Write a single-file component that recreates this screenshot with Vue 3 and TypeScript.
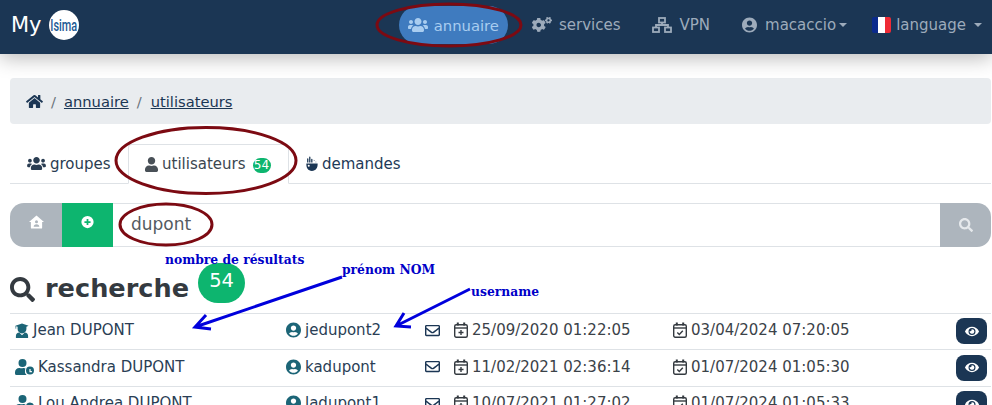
<script setup lang="ts">
const P = {
  users: 'M96 224c35.3 0 64-28.7 64-64s-28.7-64-64-64-64 28.7-64 64 28.7 64 64 64zm448 0c35.3 0 64-28.7 64-64s-28.7-64-64-64-64 28.7-64 64 28.7 64 64 64zm32 32h-64c-17.6 0-33.5 7.1-45.1 18.6 40.3 22.1 68.9 62 75.1 109.4h66c17.7 0 32-14.3 32-32v-32c0-35.3-28.7-64-64-64zm-256 0c61.9 0 112-50.1 112-112S381.9 32 320 32 208 82.1 208 144s50.1 112 112 112zm76.8 32h-8.3c-20.8 10-43.9 16-68.5 16s-47.6-6-68.5-16h-8.3C179.6 288 128 339.6 128 403.2V432c0 26.5 21.5 48 48 48h288c26.5 0 48-21.5 48-48v-28.8c0-63.6-51.6-115.2-115.2-115.2zm-223.7-13.4C161.5 263.1 145.6 256 128 256H64c-35.3 0-64 28.7-64 64v32c0 17.7 14.3 32 32 32h65.9c6.3-47.4 34.9-87.3 75.2-109.4z',
  home: 'M280.37 148.26L96 300.11V464a16 16 0 0 0 16 16l112.06-.29a16 16 0 0 0 15.92-16V368a16 16 0 0 1 16-16h64a16 16 0 0 1 16 16v95.64a16 16 0 0 0 16 16.05L464 480a16 16 0 0 0 16-16V300L295.67 148.26a12.19 12.19 0 0 0-15.3 0zM571.6 251.47L488 182.56V44.05a12 12 0 0 0-12-12h-56a12 12 0 0 0-12 12v72.61L318.47 43a48 48 0 0 0-61 0L4.34 251.47a12 12 0 0 0-1.6 16.9l25.5 31A12 12 0 0 0 45.15 301l235.22-193.74a12.19 12.19 0 0 1 15.3 0L530.9 301a12 12 0 0 0 16.9-1.6l25.5-31a12 12 0 0 0-1.7-16.93z',
  user: 'M224 256c70.7 0 128-57.3 128-128S294.7 0 224 0 96 57.3 96 128s57.3 128 128 128zm89.6 32h-16.7c-22.2 10.2-46.9 16-72.9 16s-50.6-5.8-72.9-16h-16.7C60.2 288 0 348.2 0 422.4V464c0 26.5 21.5 48 48 48h352c26.5 0 48-21.5 48-48v-41.6c0-74.2-60.2-134.4-134.4-134.4z',
  search: 'M505 442.7L405.3 343c-4.5-4.5-10.6-7-17-7H372c27.6-35.3 44-79.7 44-128C416 93.1 322.9 0 208 0S0 93.1 0 208s93.1 208 208 208c48.3 0 92.7-16.4 128-44v16.3c0 6.4 2.5 12.5 7 17l99.7 99.7c9.4 9.4 24.6 9.4 33.9 0l28.3-28.3c9.4-9.4 9.4-24.6.1-34zM208 336c-70.7 0-128-57.2-128-128 0-70.7 57.2-128 128-128 70.7 0 128 57.2 128 128 0 70.7-57.2 128-128 128z',
  userCircle: 'M248 8C111 8 0 119 0 256s111 248 248 248 248-111 248-248S385 8 248 8zm0 96c48.6 0 88 39.4 88 88s-39.4 88-88 88-88-39.4-88-88 39.4-88 88-88zm0 344c-58.7 0-111.3-26.6-146.5-68.2 18.8-35.4 55.6-59.8 98.5-59.8 2.4 0 4.8.4 7.1 1.1 13 4.2 26.6 6.9 40.9 6.9 14.3 0 28-2.7 40.9-6.9 2.3-.7 4.7-1.1 7.1-1.1 42.9 0 79.7 24.4 98.5 59.8C359.3 421.4 306.7 448 248 448z',
  eye: 'M572.52 241.4C518.29 135.59 410.93 64 288 64S57.68 135.64 3.48 241.41a32.35 32.35 0 0 0 0 29.19C57.71 376.41 165.07 448 288 448s230.32-71.64 284.52-177.41a32.35 32.35 0 0 0 0-29.19zM288 400a144 144 0 1 1 144-144 143.93 143.93 0 0 1-144 144zm0-240a95.31 95.31 0 0 0-25.31 3.79 47.85 47.85 0 0 1-66.9 66.9A95.78 95.78 0 1 0 288 160z',
  envelope: 'M464 64H48C21.49 64 0 85.49 0 112v288c0 26.51 21.49 48 48 48h416c26.51 0 48-21.49 48-48V112c0-26.51-21.49-48-48-48zm0 48v40.805c-22.422 18.259-58.168 46.651-134.587 106.49-16.841 13.247-50.201 45.072-73.413 44.701-23.208.375-56.579-31.459-73.413-44.701C106.18 199.465 70.425 171.067 48 152.805V112h416zM48 400V214.398c22.914 18.251 55.409 43.862 104.938 82.646 21.857 17.205 60.134 55.186 103.062 54.955 42.717.231 80.509-37.199 103.053-54.947 49.528-38.783 82.032-64.401 104.947-82.653V400H48z',
  cogs: 'M512.1 191l-8.2 14.3c-3 5.3-9.4 7.5-15.1 5.4-11.8-4.4-22.6-10.7-32.1-18.6-4.6-3.8-5.8-10.5-2.8-15.7l8.2-14.3c-6.9-8-12.3-17.3-15.9-27.4h-16.5c-6 0-11.2-4.3-12.2-10.3-2-12-2.1-24.6 0-37.1 1-6 6.2-10.4 12.2-10.4h16.5c3.6-10.1 9-19.4 15.9-27.4l-8.2-14.3c-3-5.2-1.9-11.9 2.8-15.7 9.5-7.9 20.4-14.2 32.1-18.6 5.7-2.1 12.1.1 15.1 5.4l8.2 14.3c10.5-1.9 21.2-1.9 31.7 0L552 6.3c3-5.3 9.4-7.5 15.1-5.4 11.8 4.4 22.6 10.7 32.1 18.6 4.6 3.8 5.8 10.5 2.8 15.7l-8.2 14.3c6.9 8 12.3 17.3 15.9 27.4h16.5c6 0 11.2 4.3 12.2 10.3 2 12 2.1 24.6 0 37.1-1 6-6.2 10.4-12.2 10.4h-16.5c-3.6 10.1-9 19.4-15.9 27.4l8.2 14.3c3 5.2 1.9 11.9-2.8 15.7-9.5 7.9-20.4 14.2-32.1 18.6-5.7 2.1-12.1-.1-15.1-5.4l-8.2-14.3c-10.4 1.9-21.2 1.9-31.7 0zm-10.5-58.8c38.5 29.6 82.4-14.3 52.8-52.8-38.5-29.7-82.4 14.3-52.8 52.8zM386.3 286.1l33.7 16.8c10.1 5.8 14.5 18.1 10.5 29.1-8.9 24.2-26.4 46.4-42.6 65.8-7.4 8.9-20.2 11.1-30.3 5.3l-29.1-16.8c-16 13.7-34.6 24.6-54.9 31.7v33.6c0 11.6-8.3 21.6-19.7 23.6-24.6 4.2-50.4 4.4-75.9 0-11.5-2-20-11.9-20-23.6V418c-20.3-7.2-38.9-18-54.9-31.7L74 403c-10 5.8-22.9 3.6-30.3-5.3-16.2-19.4-33.3-41.6-42.2-65.7-4-10.9.4-23.2 10.5-29.1l33.3-16.8c-3.9-20.9-3.9-42.4 0-63.4L12 205.8c-10.1-5.8-14.6-18.1-10.5-29 8.9-24.2 26-46.4 42.2-65.8 7.4-8.9 20.2-11.1 30.3-5.3l29.1 16.8c16-13.7 34.6-24.6 54.9-31.7V57.1c0-11.5 8.2-21.5 19.6-23.5 24.6-4.2 50.5-4.4 76-.1 11.5 2 20 11.9 20 23.6v33.6c20.3 7.2 38.9 18 54.9 31.7l29.1-16.8c10-5.8 22.9-3.6 30.3 5.3 16.2 19.4 33.2 41.6 42.1 65.8 4 10.9.1 23.2-10 29.1l-33.7 16.8c3.9 21 3.9 42.5 0 63.5zm-117.6 21.1c59.2-77-28.7-164.9-105.7-105.7-59.2 77 28.7 164.9 105.7 105.7z',
  graduate: 'M1 3 8 .4 15 3l-2.300 .9v2.500a4.700 4.700 0 0 1-9.400 0V3.900L1.800 3.400v2.800H1.200zM1.500 16v-2.200C1.500 11.600 3 10.400 5 10.200L8 13l3-2.800c2 .2 3.500 1.400 3.500 3.600V16z',
  userClock: 'M7.500 8a4 4 0 1 0 0-8 4 4 0 0 0 0 8zM10 11.500c0-.7.2-1.400.5-2-.5-.3-1.100-.5-1.700-.5h-.5a5.500 5.500 0 0 1-3.600 0h-.5A4.200 4.200 0 0 0 0 13.200V14.500A1.500 1.500 0 0 0 1.500 16h10A4.500 4.500 0 0 1 10 11.500zM15 7.500a4 4 0 1 0 0 8 4 4 0 0 0 0-8zm1.900 5.800h-2.500v-3.400h1.200v2.200h1.300z',
}

interface Person {
  name: string
  kind: 'graduate' | 'clock'
  login: string
  created: string
  seen: string
}

const people: Person[] = [
  { name: 'Jean DUPONT', kind: 'graduate', login: 'jedupont2', created: '25/09/2020 01:22:05', seen: '03/04/2024 07:20:05' },
  { name: 'Kassandra DUPONT', kind: 'clock', login: 'kadupont', created: '11/02/2021 02:36:14', seen: '01/07/2024 01:05:30' },
  { name: 'Lou Andrea DUPONT', kind: 'clock', login: 'ladupont1', created: '10/07/2021 01:27:02', seen: '01/07/2024 01:05:33' },
]
</script>

<template>
  <div class="page">
    <header class="navbar">
      <div class="brand">
        <span class="brand-my">My</span>
        <span class="brand-logo"><span class="brand-isima">Isima</span></span>
      </div>
      <nav class="menu">
        <a class="item active">
          <svg class="i-users" viewBox="0 0 640 512"><path :d="P.users" /></svg><span class="t-annuaire">annuaire</span>
        </a>
        <a class="item item-services">
          <svg class="i-users" viewBox="0 0 640 512"><path :d="P.cogs" /></svg>services
        </a>
        <a class="item item-vpn">
          <svg class="i-net stroked" viewBox="0 0 20 16" stroke="currentColor" stroke-width="1.800">
            <rect x="7" y="1" width="6" height="4.500" />
            <rect x="1" y="10.500" width="6" height="4.500" />
            <rect x="13" y="10.500" width="6" height="4.500" />
            <path d="M10 5.500V8M4 10.500V8h12v2.500" />
          </svg>VPN
        </a>
        <a class="item item-user">
          <svg class="i-circle" viewBox="0 0 496 512"><path :d="P.userCircle" /></svg>macaccio<span class="caret"></span>
        </a>
        <a class="item item-lang">
          <span class="flag"><i class="f-b"></i><i class="f-w"></i><i class="f-r"></i></span>language<span class="caret caret-far"></span>
        </a>
      </nav>
    </header>

    <main class="content">
      <div class="crumbs">
        <svg class="i-home" viewBox="0 0 576 512"><path :d="P.home" /></svg>
        <span class="sep">/</span>
        <a class="crumb">annuaire</a>
        <span class="sep sep-last">/</span>
        <a class="crumb">utilisateurs</a>
      </div>

      <div class="tabs">
        <a class="tab tab-groups">
          <svg class="i-users" viewBox="0 0 640 512"><path :d="P.users" /></svg>groupes
        </a>
        <a class="tab tab-active">
          <svg class="i-user" viewBox="0 0 448 512"><path :d="P.user" /></svg>utilisateurs
          <span class="tab-badge">54</span>
        </a>
        <a class="tab tab-req">
          <svg class="i-hand" viewBox="0 0 13 16">
            <path d="M1.200 2.500a.7.7 0 0 1 1.400 0v4h-1.400zM3.400 .7a.7.7 0 0 1 1.400 0v5.800H3.400zM5.600 3a.7.7 0 0 1 1.400 0v3.500H5.600z" />
            <path d="M.4 7.500h12.200c.3 4.500-2 8-6.200 8S.1 12 .4 7.500zM8.500 3.500l1 .6-1 .6zM10.500 5.300l.9.5-.9.500z" />
            <circle cx="3" cy="10" r="1.100" fill="#fff" />
          </svg>demandes
        </a>
      </div>

      <div class="searchbar">
        <button class="sb-btn sb-home">
          <svg viewBox="0 0 16 14" class="i-sb"><path fill-rule="evenodd" d="M8 0 0 7h2v6a1 1 0 0 0 1 1h10a1 1 0 0 0 1-1V7h2zM8 5a1.600 1.600 0 1 1 0 3.200A1.600 1.600 0 0 1 8 5zM5 12c0-1.600 1-2.600 3-2.600s3 1 3 2.600z" /></svg>
        </button>
        <button class="sb-btn sb-add">
          <svg viewBox="0 0 16 16" class="i-sb"><path fill-rule="evenodd" d="M8 1a7 7 0 1 0 0 14A7 7 0 0 0 8 1zM7 4.500h2V7h2.500v2H9v2.500H7V9H4.500V7H7z" /></svg>
        </button>
        <div class="sb-input">dupont</div>
        <button class="sb-btn sb-go">
          <svg viewBox="0 0 512 512" class="i-go"><path :d="P.search" /></svg>
        </button>
      </div>

      <div class="heading">
        <svg class="i-h" viewBox="0 0 512 512"><path :d="P.search" /></svg>
        <h1 class="title">recherche</h1>
        <span class="count">54</span>
      </div>

      <div v-for="p in people" :key="p.login" class="row">
        <div class="cell name">
          <svg v-if="p.kind === 'graduate'" class="i-grad" viewBox="1 0 14 16"><path :d="P.graduate" /></svg>
          <svg v-else class="i-clock" viewBox="0 0 19 16"><path :d="P.userClock" /></svg>
          <span>{{ p.name }}</span>
        </div>
        <div class="cell login">
          <svg class="i-login" viewBox="0 0 496 512"><path :d="P.userCircle" /></svg>
          <span>{{ p.login }}</span>
        </div>
        <div class="cell">
          <svg class="i-mail" viewBox="0 0 512 512"><path :d="P.envelope" /></svg>
        </div>
        <div class="cell date">
          <svg class="i-cal stroked" viewBox="0 0 14 16" stroke="currentColor" stroke-width="1.400">
            <rect x=".7" y="2.700" width="12.600" height="12.600" rx="1.500" />
            <path d="M.7 6h12.600" />
            <path d="M3.800 .5v3M10.200 .5v3" stroke-width="2" />
            <path d="M7 8v5M4.500 10.500h5" />
          </svg>
          <span>{{ p.created }}</span>
        </div>
        <div class="cell date">
          <svg class="i-cal stroked" viewBox="0 0 14 16" stroke="currentColor" stroke-width="1.400">
            <rect x=".7" y="2.700" width="12.600" height="12.600" rx="1.500" />
            <path d="M.7 6h12.600" />
            <path d="M3.800 .5v3M10.200 .5v3" stroke-width="2" />
            <path d="M4.300 10.500l2 2 3.500-3.800" />
          </svg>
          <span>{{ p.seen }}</span>
        </div>
        <div class="cell cell-btn">
          <button class="view">
            <svg class="i-eye" viewBox="0 0 576 512"><path :d="P.eye" /></svg>
          </button>
        </div>
      </div>
    </main>

    <svg class="overlay stroked" viewBox="0 0 992 405" width="992" height="405">
      <g class="ellipses">
        <ellipse cx="449" cy="25" rx="72" ry="21" />
        <ellipse cx="206" cy="160.500" rx="90" ry="33" />
        <ellipse cx="166" cy="224.500" rx="46" ry="20.500" />
      </g>
      <g class="arrows">
        <path d="M342 277 195 327M206 315 195 327 211 329" />
        <path d="M470 289 396 326M404 313 396 326 411 327" />
      </g>
      <g class="note">
        <text x="165" y="264">nombre de résultats</text>
        <text x="342" y="274">prénom NOM</text>
        <text x="471" y="296">username</text>
      </g>
    </svg>
  </div>
</template>

<style>
html, body { margin: 0; height: 405px; overflow: hidden; background: #fff; }
</style>

<style scoped>
.page {
  position: relative;
  width: 992px;
  height: 405px;
  overflow: hidden;
  font-family: "DejaVu Sans", sans-serif;
  font-size: 15px;
  color: #343a40;
}
svg { fill: currentColor; display: block; flex: none; }
svg.stroked { fill: none; }

.navbar {
  height: 54px;
  display: flex;
  align-items: center;
  box-sizing: border-box;
  padding-bottom: 4px;
  background: #1b3654;
  box-shadow: 0 4px 20px rgba(0, 0, 0, .28);
  position: relative;
}
.brand { display: flex; align-items: center; margin-left: 11px; }
.brand-my { color: #fff; font-size: 21px; margin-right: 7px; }
.brand-logo {
  width: 30px; height: 30px; border-radius: 50%; background: #fff;
  display: flex; align-items: center; justify-content: center;
}
.brand-isima {
  font-family: Roboto, sans-serif; font-size: 16px; color: #1c5a94;
  transform: scaleX(.68); display: block; font-weight: 500;
}
.menu { display: flex; align-items: center; margin-left: auto; margin-right: 1px; }
.item { display: flex; align-items: center; height: 38px; padding: 0 9px; color: #9dabbb; }
.item.active { background: #3f7bbf; color: #a9cdf0; border-radius: 19px; }
.t-annuaire { font-size: 14.8px; }
.item-services { margin-left: 15px; }
.item-vpn { margin-left: 13px; }
.item-user { margin-left: 14px; }
.item-lang { margin-left: 7px; }
.i-users { width: 20px; height: 16px; margin-right: 6px; }
.item-services .i-users { margin-right: 7px; }
.i-net { width: 20px; height: 16px; margin-right: 8px; }
.i-circle { width: 15px; height: 16px; margin-right: 8px; }
.caret {
  width: 0; height: 0; margin-left: 3px; margin-top: -1px;
  border-left: 4px solid transparent; border-right: 4px solid transparent; border-top: 4px solid currentColor;
}
.caret-far { margin-left: 8px; }
.flag { display: flex; width: 19px; height: 16px; margin-right: 5px; border-radius: 2px; overflow: hidden; }
.flag i { flex: 1; display: block; }
.f-b { background: #0a2a8c; }
.f-w { background: #fff; }
.f-r { background: #ee2a35; }

.content { padding: 24px 1px 0 10px; }
.crumbs {
  height: 46px; display: flex; align-items: center; padding-left: 16px;
  background: #e9ecef; border-radius: 4px; color: #1b3654; font-size: 14.7px;
}
.i-home { width: 17px; height: 15px; }
.sep { color: #6c757d; margin: 0 8px; }
.sep-last { margin-right: 9px; }
.crumb { text-decoration: underline; }

.tabs { display: flex; height: 40px; margin-top: 20px; border-bottom: 1px solid #dee2e6; box-sizing: border-box; }
.tab { display: flex; align-items: center; color: #2a3d52; box-sizing: border-box; }
.tab-groups { margin-left: 17px; width: 101px; }
.tab-groups .i-users { width: 19px; height: 15px; margin-right: 4px; }
.tab-active {
  width: 161px; height: 40px; padding-left: 16px; color: #3b4650; background: #fff;
  border: 1px solid #dee2e6; border-bottom-color: #fff; border-radius: 4px 4px 0 0;
}
.i-user { width: 13px; height: 15px; margin-right: 4px; color: #495057; }
.tab-badge {
  width: 18px; height: 15px; margin-left: 7px; margin-top: 3px; border-radius: 8px;
  background: #0db56f; color: #fff; font-size: 12px; line-height: 15px; text-align: center;
}
.tab-req { margin-left: 17px; color: #1e3a58; }
.i-hand { width: 12px; height: 16px; margin-right: 4px; color: #1b3654; }

.searchbar { display: flex; height: 44px; margin-top: 19px; }
.sb-btn { border: 0; padding: 0; display: flex; align-items: center; justify-content: center; color: #fff; }
.sb-home { width: 52px; background: #adb5bd; border-radius: 14px 0 0 14px; padding-bottom: 6px; }
.sb-add { width: 51px; background: #0db56f; padding-bottom: 6px; }
.i-sb { width: 15px; height: 14px; }
.sb-input {
  flex: 1; display: flex; align-items: center; padding: 0 0 3px 18px; box-sizing: border-box;
  border-top: 1px solid #dee2e6; border-bottom: 1px solid #dee2e6;
  font-size: 17px; color: #555b61;
}
.sb-go { width: 51px; background: #adb5bd; border-radius: 0 14px 14px 0; }
.i-go { width: 14px; height: 14px; color: #e6e9ec; }

.heading { height: 65.700px; display: flex; align-items: center; box-sizing: border-box; padding-top: 16px; }
.i-h { width: 25px; height: 25px; color: #343a40; margin-top: 3px; }
.title { margin: 1px 0 0 10px; font-size: 25.600px; font-weight: 700; color: #343a40; line-height: 30px; }
.count {
  width: 47px; height: 40px; margin-left: 9px; margin-top: -10px; border-radius: 20px;
  background: #0db56f; color: #fff; font-size: 19.500px; line-height: 36px; text-align: center;
}

.row {
  display: grid; grid-template-columns: 271px 139px 29px 219px 283px 1fr;
  height: 36.500px; padding-left: 5px; box-sizing: border-box;
  border-top: 1px solid #dee2e6; align-items: center;
}
.cell { display: flex; align-items: center; white-space: nowrap; padding-bottom: 2px; }
.cell-btn { padding-bottom: 0; }
.name { color: #2a3e55; }
.i-grad { width: 14px; height: 15px; margin-right: 4px; color: #1c6577; }
.i-clock { width: 19px; height: 16px; margin-right: 4px; color: #1c6577; }
.login { color: #2a3e55; }
.i-login { width: 15px; height: 16px; margin-right: 4px; color: #1c6577; }
.i-mail { width: 15px; height: 15px; color: #1b3654; }
.date { color: #3b4248; }
.i-cal { width: 14px; height: 16px; margin-right: 4px; color: #343a40; }
.view {
  width: 31px; height: 26px; border: 0; padding: 0; border-radius: 8px; background: #1b3654;
  color: #fff; display: flex; align-items: center; justify-content: center;
}
.i-eye { width: 14px; height: 13px; }

.overlay { position: absolute; left: 0; top: 0; pointer-events: none; }
.ellipses { fill: none; stroke: #7c0a12; stroke-width: 3px; }
.arrows { fill: none; stroke: #0000dc; stroke-width: 3px; }
.note { font-family: "DejaVu Serif", serif; font-stretch: condensed; font-size: 13.700px; font-weight: 700; fill: #0000c8; }
</style>
